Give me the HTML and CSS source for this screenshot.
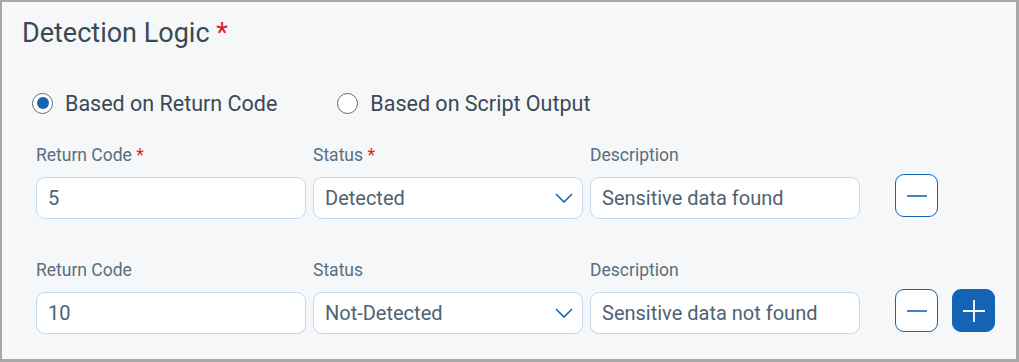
FILE: index.html
```html
<!DOCTYPE html>
<html>
<head>
<meta charset="utf-8">
<link rel="stylesheet" href="styles.css">
</head>
<body>
<div class="panel">
  <h2 class="title">Detection Logic <span class="req">*</span></h2>
  <div class="radios">
    <label class="radio"><span class="dot checked"></span>Based on Return Code</label>
    <label class="radio"><span class="dot"></span>Based on Script Output</label>
  </div>
  <div class="rule first">
    <div class="field">
      <div class="lbl">Return Code <span class="req">*</span></div>
      <div class="input">5</div>
    </div>
    <div class="field">
      <div class="lbl">Status <span class="req">*</span></div>
      <div class="input select">Detected
        <svg class="chev" width="18" height="10" viewBox="0 0 18 10"><path d="M1 1 L9 9 L17 1" fill="none" stroke="#1563b5" stroke-width="1.6"/></svg>
      </div>
    </div>
    <div class="field">
      <div class="lbl">Description</div>
      <div class="input">Sensitive data found</div>
    </div>
    <div class="btns">
      <button class="btn outline"><svg width="20" height="20" viewBox="0 0 20 20"><path d="M0 10 H20" stroke="#1563b5" stroke-width="1.6"/></svg></button>
    </div>
  </div>
  <div class="rule">
    <div class="field">
      <div class="lbl">Return Code</div>
      <div class="input">10</div>
    </div>
    <div class="field">
      <div class="lbl">Status</div>
      <div class="input select">Not-Detected
        <svg class="chev" width="18" height="10" viewBox="0 0 18 10"><path d="M1 1 L9 9 L17 1" fill="none" stroke="#1563b5" stroke-width="1.6"/></svg>
      </div>
    </div>
    <div class="field">
      <div class="lbl">Description</div>
      <div class="input">Sensitive data not found</div>
    </div>
    <div class="btns">
      <button class="btn outline"><svg width="20" height="20" viewBox="0 0 20 20"><path d="M0 10 H20" stroke="#1563b5" stroke-width="1.6"/></svg></button>
      <button class="btn solid"><svg width="22" height="22" viewBox="0 0 22 22"><path d="M0 11 H22 M11 0 V22" stroke="#ffffff" stroke-width="1.8"/></svg></button>
    </div>
  </div>
</div>
</body>
</html>
```
FILE: styles.css
```css
* { box-sizing: border-box; }
html, body { margin: 0; padding: 0; }
body {
  font-family: Roboto, "Liberation Sans", sans-serif;
  width: 1019px;
  height: 362px;
  background: #ffffff;
}
.panel {
  width: 1019px;
  height: 362px;
  background: #f5f7f9;
  border-style: solid;
  border-color: #a7a7a7;
  border-width: 2px 3px 3px 2px;
  padding: 16px 0 0 20px;
}
.title {
  margin: 0;
  font-size: 27px;
  font-weight: 400;
  color: #3b4953;
  line-height: 30px;
}
.req { color: #e0201b; }
.radios {
  display: flex;
  gap: 60px;
  margin: 40px 0 0 10px;
  height: 30px;
  align-items: center;
}
.radio {
  display: flex;
  align-items: center;
  gap: 12px;
  font-size: 21.5px;
  color: #3b4953;
}
.dot {
  width: 21px;
  height: 21px;
  border-radius: 50%;
  border: 1px solid #5f6b75;
  background: #fff;
  display: flex;
  align-items: center;
  justify-content: center;
}
.dot.checked::after {
  content: "";
  width: 12px;
  height: 12px;
  border-radius: 50%;
  background: #1563b5;
}
.rule {
  display: flex;
  align-items: flex-end;
  margin: 41px 0 0 14px;
  gap: 7px;
}
.rule.first { margin-top: 27px; }
.field { width: 270px; }
.lbl {
  font-size: 17.5px;
  color: #5a6e7e;
  line-height: 20px;
  margin-bottom: 12px;
}
.input {
  height: 42px;
  background: #fff;
  border: 1px solid #c3d8ee;
  border-radius: 9px;
  padding: 0 11px;
  display: flex;
  align-items: center;
  font-size: 20px;
  color: #4f6272;
}
.select { justify-content: space-between; padding-right: 9px; }
.btns {
  display: flex;
  gap: 14px;
  margin-left: 28px;
  margin-bottom: 2px;
}
.btn {
  width: 43px;
  height: 43px;
  border-radius: 9px;
  display: flex;
  align-items: center;
  justify-content: center;
  padding: 0;
}
.btn.outline { background: #fff; border: 1.5px solid #1563b5; }
.btn.solid { background: #1563b5; border: 1.5px solid #1563b5; }
```
